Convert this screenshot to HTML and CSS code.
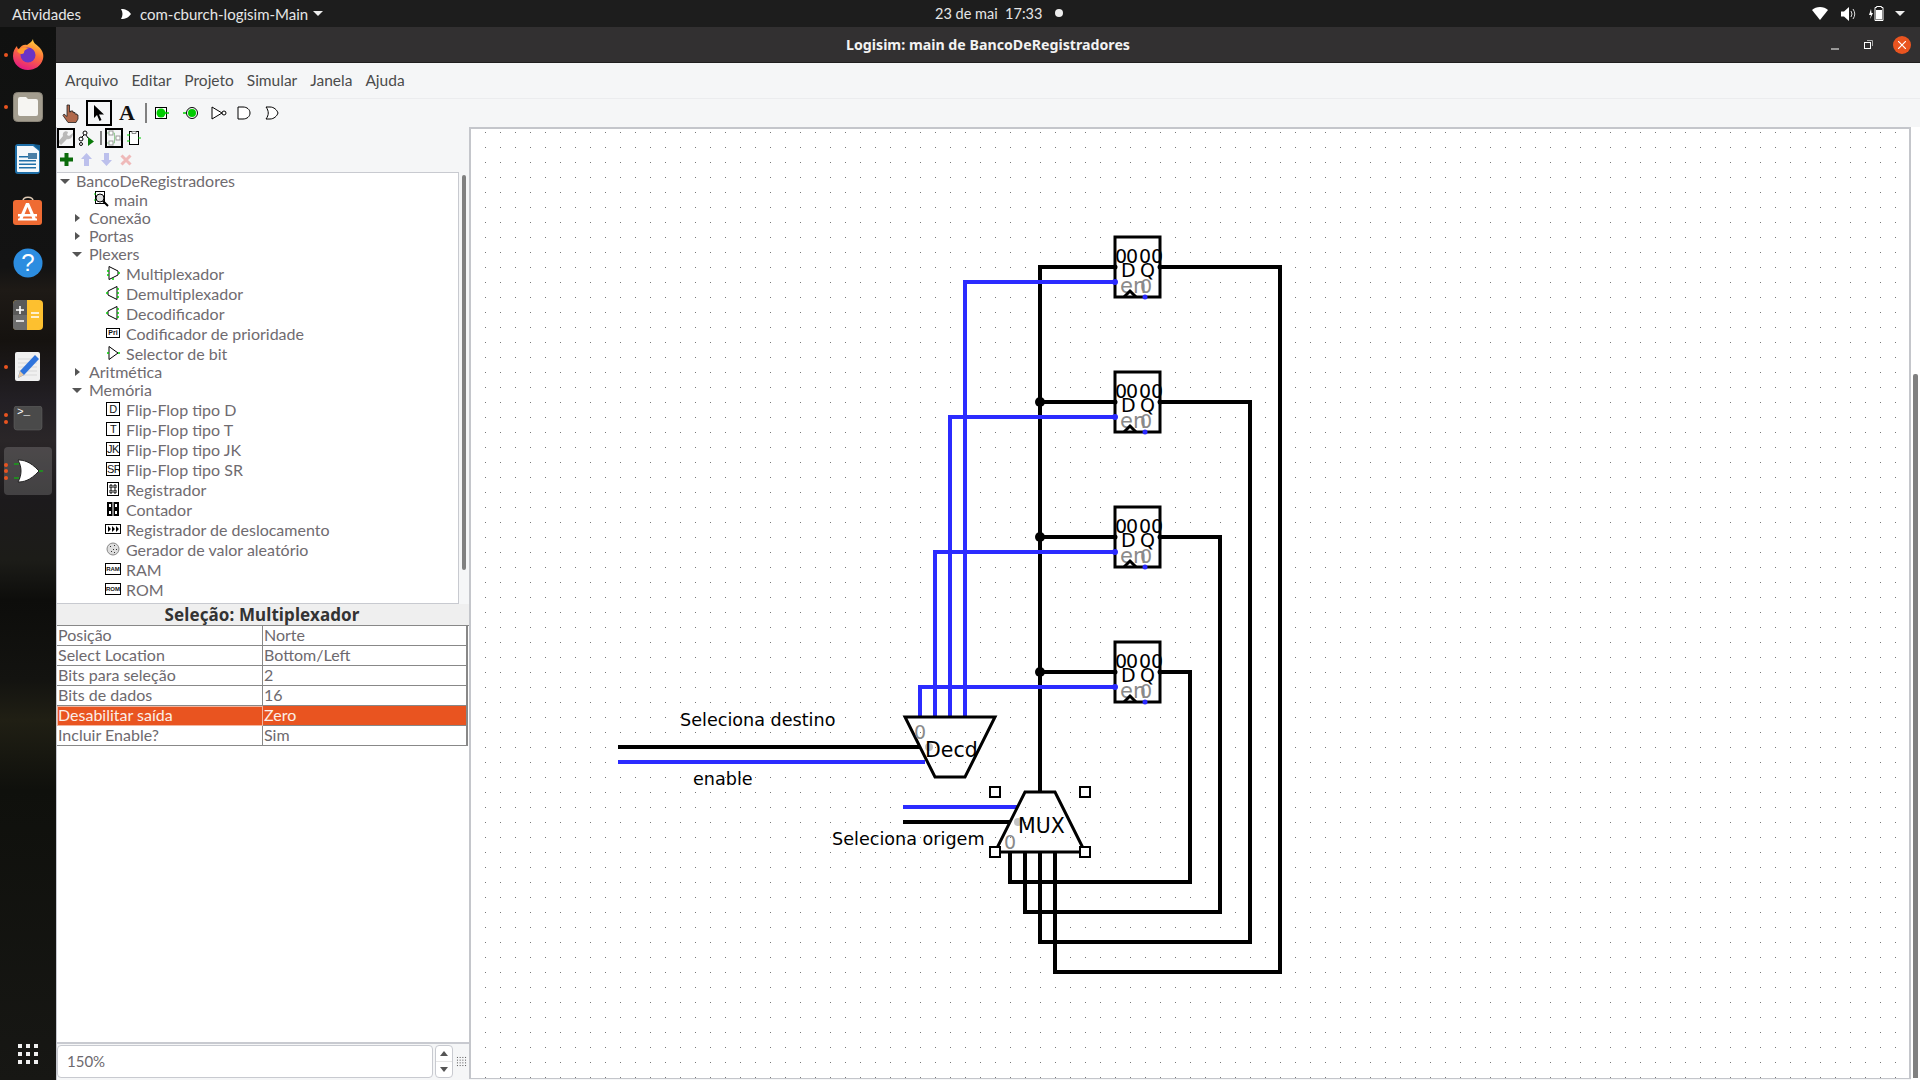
FILE: index.html
```html
<!DOCTYPE html>
<html lang="pt-BR">
<head>
<meta charset="utf-8">
<title>Logisim: main de BancoDeRegistradores</title>
<link rel="stylesheet" href="styles.css">
</head>
<body>
<svg class="defs" width="0" height="0" aria-hidden="true">
  <defs>
    <symbol id="i-mux" viewBox="0 0 16 16"><path d="M4 1.500V14.500L13 10V6Z" class="ic"/><path d="M2 6h2M2 10h2M13 8h2M8 13v2" class="ig"/></symbol>
    <symbol id="i-demux" viewBox="0 0 16 16"><path d="M12 1.500V14.500L3 10V6Z" class="ic"/><path d="M1 8h2M12 4h2M12 8h2M12 12h2" class="ig"/></symbol>
    <symbol id="i-sel" viewBox="0 0 16 16"><path d="M4 1.500V14.500L13 8Z" class="ic"/><path d="M2 8h2M13 8h2" class="ig"/></symbol>
    <symbol id="i-reg" viewBox="0 0 16 16"><rect x="2.500" y="1.500" width="11" height="13" class="ic"/><path d="M5 4h2v3H5zM9 4h2v3H9zM5 9h2v3H5zM9 9h2v3H9z" class="ic"/></symbol>
    <symbol id="i-cnt" viewBox="0 0 16 16"><rect x="2" y="1" width="12" height="14" fill="#000"/><path d="M4 3h2v3H4zM10 3h2v3h-2zM4 10h2v3H4zM10 10h2v3h-2z" fill="#fff"/><path d="M8 1v14" stroke="#fff"/></symbol>
    <symbol id="i-shift" viewBox="0 0 16 16"><rect x="0.500" y="3.500" width="15" height="9" class="ic"/><path d="M3 5l3 3-3 3zM7 5l3 3-3 3zM11 5l3 3-3 3z" fill="#000"/></symbol>
    <symbol id="i-rand" viewBox="0 0 16 16"><circle cx="8" cy="8" r="6" fill="#ddd" stroke="#888"/><path d="M5 5h1v1H5zM9 4h1v1H9zM11 8h1v1h-1zM6 10h1v1H6zM8 8h1v1H8zM9 11h1v1H9z" fill="#333"/></symbol>
  </defs>
</svg>

<header class="topbar">
  <span class="activities">Atividades</span>
  <span class="app-menu">
    <svg class="app-glyph" width="12" height="12" viewBox="0 0 12 12"><path d="M1 1C3 4 3 8 1 11C6 11 9 9 11 6C9 3 6 1 1 1Z" fill="#fff"/></svg>
    <span>com-cburch-logisim-Main</span>
    <i class="caret"></i>
  </span>
  <span class="clock">23 de mai&nbsp;&nbsp;17:33</span><i class="clock-dot"></i>
  <span class="tray">
    <svg width="16" height="14" viewBox="0 0 16 14"><path d="M0 3C4 -1 12 -1 16 3L8 13Z" fill="#fff"/></svg>
    <svg width="15" height="14" viewBox="0 0 15 14"><path d="M0 4.500H3L8 0V14L3 9.500H0Z" fill="#fff"/><path d="M10 4Q12 7 10 10M12 2Q15.500 7 12 12" fill="none" stroke="#ddd"/></svg>
    <svg width="15" height="15" viewBox="0 0 15 15"><path d="M2 1L0 7H2L1 11L4 5H2.500Z" fill="#fff" transform="translate(0 2)"/><path d="M7.500.5h5v1h1.500v13h-8v-13h1.500z" fill="none" stroke="#fff"/><rect x="7" y="4" width="6" height="9.500" fill="#fff"/></svg>
    <i class="caret"></i>
  </span>
</header>

<div class="desktop">
  <nav class="dock">
    <div class="dock-item"><i class="run run1"></i>
      <svg class="ff" width="32" height="32" viewBox="0 0 32 32"><defs><linearGradient id="ffg" x1="0.700" y1="0" x2="0.300" y2="1"><stop offset="0" stop-color="#ffd53c"/><stop offset=".45" stop-color="#ff7139"/><stop offset="1" stop-color="#e31587"/></linearGradient></defs><path d="M21 1C21 5 24 6 27 9C31 13 32 17 31 21C29 28 23 32 16 32C8 32 1 26 1 18C1 13 3 10 5 8C5 10 6 11 7 11C9 7 13 6 15 7C17 5 20 4 21 1Z" fill="url(#ffg)"/><circle cx="16" cy="17" r="7.500" fill="#6b34c5"/><path d="M5 13C8 9 13 9 17 11C13 11 12 13 12 15C10 17 7 16 5 13Z" fill="#ff9d2e"/></svg>
    </div>
    <div class="dock-item"><i class="run run1"></i>
      <svg width="30" height="30" viewBox="0 0 30 30"><rect x=".5" y=".5" width="29" height="29" rx="4" fill="#a39d8f" stroke="#8a8578"/><path d="M5 7a2 2 0 012-2h6l2 2h8a2 2 0 012 2v13a2 2 0 01-2 2H7a2 2 0 01-2-2Z" fill="#f6f5f2"/></svg>
    </div>
    <div class="dock-item">
      <svg width="26" height="30" viewBox="0 0 26 30"><path d="M3 0H19L25 5V27a3 3 0 01-3 3H3a3 3 0 01-3-3V3a3 3 0 013-3Z" fill="#1f6fa8"/><path d="M2 2H18L24 7V27a1 1 0 01-1 1H3a1 1 0 01-1-1Z" fill="#f4f8fb"/><path d="M18 0L25 7V1Z" fill="#125a8c"/><path d="M4 12h10v1.500H4zM4 16h17v1.500H4zM4 19.500h17v1.500H4zM4 23h17v1.500H4z" fill="#1f6fa8"/><rect x="13" y="9" width="9" height="6" fill="#4a7fa6"/></svg>
    </div>
    <div class="dock-item">
      <svg width="30" height="30" viewBox="0 0 30 30"><path d="M10 5C10 0 20 0 20 5" fill="none" stroke="#ddc9b4" stroke-width="1.500"/><rect y="4" width="29" height="25" rx="3" fill="#ef6b33"/><path d="M13 7H16L23 23H19.500L14.500 11L9.500 23H6ZM5 18H24V20.500H5ZM5 22.500H24V24.500H5Z" fill="#fff"/></svg>
    </div>
    <div class="dock-item">
      <svg width="30" height="30" viewBox="0 0 30 30"><circle cx="15" cy="15" r="14.500" fill="#2c8de0"/><text x="15" y="23" class="dock-q">?</text></svg>
    </div>
    <div class="dock-item">
      <svg width="30" height="30" viewBox="0 0 30 30"><rect width="30" height="30" rx="4" fill="#fdc02f"/><path d="M4 0H14V30H4A4 4 0 010 26V4A4 4 0 014 0Z" fill="#5a5a5a"/><path d="M0 15H14V30H4A4 4 0 010 26Z" fill="#6d6d6d"/><path d="M3 10H11M7 6V14M3 21H11M18 13H26M18 17H26" stroke="#fff" stroke-width="1.600"/></svg>
    </div>
    <div class="dock-item"><i class="run run1"></i>
      <svg width="26" height="30" viewBox="0 0 26 30"><rect width="25" height="29" rx="2" fill="#f0f0f0"/><path d="M3 7H22M3 11H22M3 15H22M3 19H22M3 23H22" stroke="#d8d8d8"/><path d="M20 3L24 7L9 23L3 26L5 19Z" fill="#2f74dc"/><path d="M5 19L9 23L3 26Z" fill="#e7c9a3"/></svg>
    </div>
    <div class="dock-item"><i class="run run2a"></i><i class="run run2b"></i>
      <svg width="30" height="26" viewBox="0 0 30 26"><rect width="28" height="24" x="1" rx="3" fill="#4a4a4a" stroke="#666" stroke-width=".5"/><text x="4" y="9" class="dock-term">&gt;_</text></svg>
    </div>
    <div class="dock-item active"><i class="run run3a"></i><i class="run run3b"></i><i class="run run3c"></i>
      <svg width="30" height="24" viewBox="0 0 30 24"><path d="M5 1C10 1 17 2 26 12C17 22 10 23 5 23C9 16 9 8 5 1Z" fill="#fff" stroke="#222"/><path d="M1 5H6M1 19H6M26 12H30" stroke="#0c0"/></svg>
    </div>
    <div class="dock-item apps">
      <svg width="21" height="21" viewBox="0 0 21 21"><path d="M0 0h4v4H0zM8 0h4v4H8zM16 0h4v4h-4zM0 8h4v4H0zM8 8h4v4H8zM16 8h4v4h-4zM0 16h4v4H0zM8 16h4v4H8zM16 16h4v4h-4z" fill="#f0f0f0"/></svg>
    </div>
  </nav>

  <main class="window">
    <div class="titlebar">
      <span class="title">Logisim: main de BancoDeRegistradores</span>
      <div class="win-buttons">
        <svg width="8" height="8" viewBox="0 0 8 8" class="wb-min"><path d="M0 7H8" stroke="#fff" stroke-width="1"/></svg>
        <svg width="9" height="9" viewBox="0 0 9 9" class="wb-max"><rect x=".5" y="2.500" width="6" height="6" fill="none" stroke="#fff"/><path d="M3 .5H8.500V6" fill="none" stroke="#aaa"/></svg>
        <span class="wb-close"><svg width="8" height="8" viewBox="0 0 8 8"><path d="M0 0L8 8M8 0L0 8" stroke="#fff" stroke-width="1.200"/></svg></span>
      </div>
    </div>

    <div class="menubar">
      <span>Arquivo</span><span>Editar</span><span>Projeto</span><span>Simular</span><span>Janela</span><span>Ajuda</span>
    </div>

    <div class="toolbar">
      <span class="tool"><svg width="18" height="19" viewBox="0 0 18 19"><path d="M5 1h2.500v7l1 0V7h2.500v1.500h2V10h2v1h1v4l-2 3.500H6L1 11.500 2 10l3 2.500Z" fill="#b0694c" stroke="#222" stroke-width=".8"/></svg></span>
      <span class="tool tool-on"><svg width="12" height="16" viewBox="0 0 12 16"><path d="M1 0V13L4 10L6.500 16L8.500 15L6 9.500H11Z" fill="#000"/></svg></span>
      <span class="tool tool-a">A</span>
      <i class="sep sep-main"></i>
      <span class="tool"><svg width="16" height="14" viewBox="0 0 16 14"><rect x=".5" y="1.500" width="11" height="11" fill="#fff" stroke="#000"/><circle cx="6" cy="7" r="4.500" fill="#0c0"/><path d="M9 7H14" stroke="#0c0" stroke-width="1.500"/></svg></span>
      <span class="tool"><svg width="16" height="14" viewBox="0 0 16 14"><path d="M0 7H4" stroke="#0c0" stroke-width="1.500"/><circle cx="9" cy="7" r="5.500" fill="#fff" stroke="#000"/><circle cx="9" cy="7" r="4" fill="#0c0"/></svg></span>
      <span class="tool"><svg width="16" height="14" viewBox="0 0 16 14"><path d="M1 1V13L11 7Z" fill="#fff" stroke="#000"/><circle cx="13" cy="7" r="2" fill="#fff" stroke="#000"/></svg></span>
      <span class="tool tool-and"><svg width="14" height="14" viewBox="0 0 14 14"><path d="M1 1H6C10 1 13 3.500 13 7S10 13 6 13H1Z" fill="#fff" stroke="#000"/></svg></span>
      <span class="tool"><svg width="14" height="14" viewBox="0 0 14 14"><path d="M1 1H5C9 1 12 4 13 7C12 10 9 13 5 13H1C4 9 4 5 1 1Z" fill="#fff" stroke="#000"/></svg></span>
    </div>

    <div class="workspace">
      <aside class="left">
        <div class="tabs">
          <span class="mini mini-on"><svg width="16" height="16" viewBox="0 0 16 16"><path d="M15 3L11 6L9 5L10 2C7 0 4 3 5 6L0 12L3 15L9 9C12 10 15 7 15 3Z" fill="#b9b9b9"/></svg></span>
          <span class="mini"><svg width="16" height="16" viewBox="0 0 16 16"><circle cx="7" cy="3" r="2" fill="#fff" stroke="#000"/><circle cx="3" cy="9" r="2" fill="#fff" stroke="#000"/><circle cx="3" cy="14" r="1.500" fill="#fff" stroke="#000"/><path d="M6 5L3.500 7.500M8 5L10 8" stroke="#000"/><path d="M10 7L16 11.500L10 16Z" fill="#0a7a0a"/></svg></span>
          <i class="sep sep-mini"></i>
          <span class="mini mini-on"><svg width="16" height="16" viewBox="0 0 16 16"><rect x="3" y="1" width="4" height="4" fill="#fff" stroke="#999"/><rect x="3" y="11" width="4" height="4" fill="#fff" stroke="#999"/><rect x="10" y="6" width="4" height="4" fill="#fff" stroke="#999"/><path d="M0 3H3M0 13H3M7 3H8.500V13H7M8.500 8H10" fill="none" stroke="#9c9"/></svg></span>
          <span class="mini"><svg width="14" height="16" viewBox="0 0 14 16"><rect x="2.500" y="1.500" width="9" height="13" fill="#fff" stroke="#000"/><path d="M5 1.500h4v2H5z" fill="#fff" stroke="#888"/><path d="M0 5H3M0 11H3M11 8H14" stroke="#0c0"/></svg></span>
        </div>
        <div class="tabs tabs-edit">
          <span class="mini"><svg width="13" height="13" viewBox="0 0 13 13"><path d="M4.500 0h4v4.500H13v4H8.500V13h-4V8.500H0v-4h4.500Z" fill="#0a6b0a"/></svg></span>
          <span class="mini"><svg width="11" height="13" viewBox="0 0 11 13"><path d="M5.500 0L11 6H8V13H3V6H0Z" fill="#bcc0ec"/></svg></span>
          <span class="mini"><svg width="11" height="13" viewBox="0 0 11 13"><path d="M5.500 13L11 7H8V0H3V7H0Z" fill="#bcc0ec"/></svg></span>
          <span class="mini"><svg width="12" height="12" viewBox="0 0 12 12"><path d="M1.500 1.500L10.500 10.500M10.500 1.500L1.500 10.500" stroke="#efb9b9" stroke-width="3"/></svg></span>
        </div>

        <div class="explorer">
          <div class="tree">
            <div class="lib root"><i class="tri open"></i>BancoDeRegistradores</div>
            <div class="item circ"><svg class="ti" width="16" height="16" viewBox="0 0 16 16"><rect x="1.500" y=".5" width="9" height="12" fill="#fff" stroke="#000"/><circle cx="6" cy="7" r="4" fill="#ddd" stroke="#000"/><path d="M9 10L14 15" stroke="#000" stroke-width="2"/><path d="M0 3H2M0 9H2" stroke="#0c0"/></svg><span>main</span></div>
            <div class="lib"><i class="tri"></i>Conexão</div>
            <div class="lib"><i class="tri"></i>Portas</div>
            <div class="lib"><i class="tri open"></i>Plexers</div>
            <div class="item"><svg class="ti" width="16" height="16"><use href="#i-mux"/></svg><span>Multiplexador</span></div>
            <div class="item"><svg class="ti" width="16" height="16"><use href="#i-demux"/></svg><span>Demultiplexador</span></div>
            <div class="item"><svg class="ti" width="16" height="16"><use href="#i-demux"/></svg><span>Decodificador</span></div>
            <div class="item"><span class="tb tb-s">Pri</span><span>Codificador de prioridade</span></div>
            <div class="item"><svg class="ti" width="16" height="16"><use href="#i-sel"/></svg><span>Selector de bit</span></div>
            <div class="lib"><i class="tri"></i>Aritmética</div>
            <div class="lib"><i class="tri open"></i>Memória</div>
            <div class="item"><span class="tb">D</span><span>Flip-Flop tipo D</span></div>
            <div class="item"><span class="tb">T</span><span>Flip-Flop tipo T</span></div>
            <div class="item"><span class="tb">JK</span><span>Flip-Flop tipo JK</span></div>
            <div class="item"><span class="tb">SR</span><span>Flip-Flop tipo SR</span></div>
            <div class="item"><svg class="ti" width="16" height="16"><use href="#i-reg"/></svg><span>Registrador</span></div>
            <div class="item"><svg class="ti" width="16" height="16"><use href="#i-cnt"/></svg><span>Contador</span></div>
            <div class="item"><svg class="ti" width="16" height="16"><use href="#i-shift"/></svg><span>Registrador de deslocamento</span></div>
            <div class="item"><svg class="ti" width="16" height="16"><use href="#i-rand"/></svg><span>Gerador de valor aleatório</span></div>
            <div class="item"><span class="tb tb-m">RAM</span><span>RAM</span></div>
            <div class="item"><span class="tb tb-m">ROM</span><span>ROM</span></div>
            <div class="item"><span class="tb-blank"></span><span>Joystick</span></div>
          </div>
          <div class="tree-scroll"><i class="tree-thumb"></i></div>
        </div>

        <div class="prop-title">Seleção: Multiplexador</div>
        <div class="props">
          <span>Posição</span><span>Norte</span>
          <span>Select Location</span><span>Bottom/Left</span>
          <span>Bits para seleção</span><span>2</span>
          <span>Bits de dados</span><span>16</span>
          <span class="sel sel-k">Desabilitar saída</span><span class="sel">Zero</span>
          <span>Incluir Enable?</span><span>Sim</span>
        </div>
        <div class="prop-fill"></div>

        <div class="zoombar">
          <span class="zoom-input">150%</span>
          <span class="spin"><i class="up"></i><i class="down"></i></span>
          <span class="griddots"></span>
        </div>
      </aside>

      <section class="canvas">
        <svg class="board" width="1438" height="949" viewBox="471 129 1438 949">
          <defs>
            <pattern id="dots" patternUnits="userSpaceOnUse" x="5" y="12" width="15" height="15"><rect width="1" height="1" fill="#777"/></pattern>
          </defs>
          <rect x="471" y="129" width="1438" height="949" fill="#fff"/>
          <rect x="471" y="129" width="1438" height="949" fill="url(#dots)"/>

          <g class="w">
            <path d="M1040 792V267H1115"/>
            <path d="M1040 402H1115M1040 537H1115M1040 672H1115"/>
            <path d="M1160 267H1280V972H1055V852"/>
            <path d="M1160 402H1250V942H1040V852"/>
            <path d="M1160 537H1220V912H1025V852"/>
            <path d="M1160 672H1190V882H1010V852"/>
            <path d="M618 747H920"/>
            <path d="M903 822H1010"/>
          </g>
          <circle cx="1040" cy="402" r="5"/><circle cx="1040" cy="537" r="5"/><circle cx="1040" cy="672" r="5"/>

          <g class="wb">
            <path d="M965 717V282H1115"/>
            <path d="M950 717V417H1115"/>
            <path d="M935 717V552H1115"/>
            <path d="M920 717V687H1115"/>
            <path d="M618 762H925"/>
            <path d="M903 807H1017"/>
          </g>

          <g transform="translate(1115 237)" class="reg">
            <rect width="45" height="60" class="box"/>
            <text x="0" y="26" class="r0">0</text><text x="11" y="26" class="r0">0</text><text x="24" y="26" class="r0">0</text><text x="36" y="26" class="r0">0</text>
            <text x="6" y="40" class="r0">D</text><text x="25" y="40" class="r0">Q</text>
            <text x="5" y="56" class="re">en</text><text x="25" y="56" class="rg">0</text>
            <path d="M9 60L15 54L21 60" class="clk"/>
            <circle cx="0" cy="30" r="2.500"/><circle cx="45" cy="30" r="2.500"/>
            <circle cx="0" cy="45" r="3" class="bd"/><circle cx="30" cy="60" r="2.500" class="bd"/>
          </g>
          <g transform="translate(1115 372)" class="reg">
            <rect width="45" height="60" class="box"/>
            <text x="0" y="26" class="r0">0</text><text x="11" y="26" class="r0">0</text><text x="24" y="26" class="r0">0</text><text x="36" y="26" class="r0">0</text>
            <text x="6" y="40" class="r0">D</text><text x="25" y="40" class="r0">Q</text>
            <text x="5" y="56" class="re">en</text><text x="25" y="56" class="rg">0</text>
            <path d="M9 60L15 54L21 60" class="clk"/>
            <circle cx="0" cy="30" r="2.500"/><circle cx="45" cy="30" r="2.500"/>
            <circle cx="0" cy="45" r="3" class="bd"/><circle cx="30" cy="60" r="2.500" class="bd"/>
          </g>
          <g transform="translate(1115 507)" class="reg">
            <rect width="45" height="60" class="box"/>
            <text x="0" y="26" class="r0">0</text><text x="11" y="26" class="r0">0</text><text x="24" y="26" class="r0">0</text><text x="36" y="26" class="r0">0</text>
            <text x="6" y="40" class="r0">D</text><text x="25" y="40" class="r0">Q</text>
            <text x="5" y="56" class="re">en</text><text x="25" y="56" class="rg">0</text>
            <path d="M9 60L15 54L21 60" class="clk"/>
            <circle cx="0" cy="30" r="2.500"/><circle cx="45" cy="30" r="2.500"/>
            <circle cx="0" cy="45" r="3" class="bd"/><circle cx="30" cy="60" r="2.500" class="bd"/>
          </g>
          <g transform="translate(1115 642)" class="reg">
            <rect width="45" height="60" class="box"/>
            <text x="0" y="26" class="r0">0</text><text x="11" y="26" class="r0">0</text><text x="24" y="26" class="r0">0</text><text x="36" y="26" class="r0">0</text>
            <text x="6" y="40" class="r0">D</text><text x="25" y="40" class="r0">Q</text>
            <text x="5" y="56" class="re">en</text><text x="25" y="56" class="rg">0</text>
            <path d="M9 60L15 54L21 60" class="clk"/>
            <circle cx="0" cy="30" r="2.500"/><circle cx="45" cy="30" r="2.500"/>
            <circle cx="0" cy="45" r="3" class="bd"/><circle cx="30" cy="60" r="2.500" class="bd"/>
          </g>

          <path d="M905 717H995L965 777H935Z" class="gate"/>
          <text x="914" y="739" class="rg">0</text>
          <circle cx="929" cy="747" r="4" class="gd"/>
          <text x="925" y="757" class="gl">Decd</text>

          <path d="M1025 792H1055L1085 852H995Z" class="gate"/>
          <path d="M1040 792V785" class="stub"/>
          <text x="1004" y="849" class="rg">0</text>
          <circle cx="1018" cy="822" r="4" class="gd"/>
          <text x="1018" y="833" class="gl">MUX</text>
          <rect x="990" y="787" width="10" height="10" class="hd"/>
          <rect x="1080" y="787" width="10" height="10" class="hd"/>
          <rect x="990" y="847" width="10" height="10" class="hd"/>
          <rect x="1080" y="847" width="10" height="10" class="hd"/>

          <text x="680" y="726" class="lb">Seleciona destino</text>
          <text x="693" y="785" class="lb">enable</text>
          <text x="832" y="845" class="lb">Seleciona origem</text>
        </svg>
      </section>
      <div class="vscroll"><i class="vthumb"></i></div>
    </div>
  </main>
</div>
</body>
</html>
```

FILE: styles.css
```css
* { box-sizing: border-box; }
html, body { margin: 0; padding: 0; height: 100%; }
body {
  width: 1920px; height: 1080px; overflow: hidden;
  display: flex; flex-direction: column;
  font-family: "Lato", "Noto Sans", sans-serif;
  background: #111;
}
.defs { position: absolute; }
.ic { fill: #fff; stroke: #000; stroke-width: 1; }
.ig { fill: none; stroke: #0c0; stroke-width: 1.500; }

/* top bar */
.topbar {
  height: 27px; flex: none; background: #1d1d1d; color: #e6e6e6;
  display: flex; align-items: center; font-size: 15px; position: relative;
}
.activities { margin-left: 12px; width: 108px; }
.app-menu { display: flex; align-items: center; gap: 8px; }
.app-menu .caret { margin-left: -3px; }
.caret { display: block; width: 0; height: 0; border: 5px solid transparent; border-top: 5px solid #eee; border-bottom: 0; }
.clock { position: absolute; left: 935px; font-size: 14.500px; }
.clock-dot { position: absolute; left: 1055px; top: 9px; width: 8px; height: 8px; border-radius: 50%; background: #eee; }
.tray { margin-left: auto; margin-right: 15px; display: flex; align-items: center; gap: 13px; }
.tray .caret { margin-left: -2px; }

.desktop { flex: 1; display: flex; min-height: 0; }

/* dock */
.dock {
  width: 56px; flex: none; display: flex; flex-direction: column; padding-top: 2px;
  background: linear-gradient(180deg, #101110 0, #131313 240px, #1e1a16 263px, #15120f 313px, #221f24 373px, #2a2628 413px, #1c1a1c 473px, #1c1c18 533px, #0d0d0b 573px, #131310 653px, #201f14 693px, #0f100c 763px, #171714 1053px);
}
.dock-item { height: 52px; flex: none; display: flex; align-items: center; justify-content: center; position: relative; }
.dock-item.active::before { content: ""; position: absolute; left: 4px; right: 4px; top: 2px; bottom: 2px; background: rgba(255,255,255,.17); border-radius: 4px; }
.dock-item svg { position: relative; }
.dock-item .ff { margin-bottom: 2px; }
.dock-item.apps { margin-top: auto; }
.run { position: absolute; left: 4px; width: 4px; height: 4px; border-radius: 50%; background: #e95420; z-index: 1; }
.run1 { top: 24px; }
.run2a { top: 20px; } .run2b { top: 27px; }
.run3a { top: 18px; } .run3b { top: 24px; } .run3c { top: 31px; }
.dock-q { font: 400 24px "Liberation Sans", sans-serif; fill: #fff; text-anchor: middle; }
.dock-term { font: 11px "Liberation Mono", monospace; fill: #fff; }

/* window */
.window { flex: 1; display: flex; flex-direction: column; min-width: 0; background: #f5f6f7; }
.titlebar {
  height: 36px; flex: none; background: #323031; border-bottom: 1px solid #1f1e1e; color: #f2f2f2;
  display: flex; align-items: center; justify-content: center; position: relative;
  font-weight: 700; font-size: 14.200px; font-family: "Noto Sans", sans-serif;
}
.win-buttons { position: absolute; right: 9px; top: 0; bottom: 0; display: flex; align-items: center; }
.wb-min { margin-right: 25px; margin-top: 2px; }
.wb-max { margin-right: 20px; }
.wb-close { width: 18px; height: 18px; border-radius: 50%; background: #e95420; display: flex; align-items: center; justify-content: center; }

.menubar {
  height: 36px; flex: none; display: flex; align-items: center; gap: 13px; padding: 0 0 2px 9px;
  font-size: 15.500px; color: #4b4b4b; border-bottom: 1px solid #ebecee;
}

.toolbar { height: 28px; flex: none; display: flex; align-items: center; padding-left: 1px; }
.tool { width: 28px; height: 26px; flex: none; display: flex; align-items: center; justify-content: center; }
.tool-on { outline: 2px solid #000; outline-offset: -2px; width: 26px; margin: 0 1px; }
.tool-and { margin-left: -3px; }
.tool-a { font: 700 22px "Liberation Serif", serif; color: #111; }
.sep { display: block; background: #808080; flex: none; }
.sep-main { width: 2px; height: 20px; margin: 0 2px 0 4px; }

.workspace { flex: 1; display: flex; min-height: 0; }
.left {
  width: 413px; flex: none; display: flex; flex-direction: column; border-left: 1px solid #c6c8cf;
}
.tabs { height: 22px; flex: none; display: flex; align-items: center; margin-left: -1px; }
.tabs-edit { height: 23px; padding-bottom: 2px; }
.mini { width: 20px; height: 20px; flex: none; display: flex; align-items: center; justify-content: center; }
.mini-on { outline: 2px solid #000; outline-offset: -2px; width: 18px; margin: 0 1px; }
.sep-mini { width: 2px; height: 14px; margin: 0 2px 0 4px; }

.explorer { height: 432px; flex: none; display: flex; }
.tree {
  width: 402px; flex: none; background: #fff; border: 1px solid #c8cad0; border-left: 0;
  overflow: hidden; font-size: 16px; color: #6f6b70;
}
.lib { height: 18px; display: flex; align-items: center; padding-left: 18px; line-height: 18px; white-space: nowrap; }
.lib.root { height: 16px; padding-left: 6px; }
.tri { display: block; flex: none; width: 0; height: 0; margin-right: 9px; border-style: solid; border-width: 4.500px 0 4.500px 5px; border-color: transparent transparent transparent #555; }
.tri.open { border-width: 5px 5px 0 5px; border-color: #555 transparent transparent transparent; margin-left: -3px; margin-right: 7px; }
.root .tri.open { margin-right: 6px; }
.item { height: 20px; display: flex; align-items: center; padding-left: 48px; white-space: nowrap; }
.item.circ { padding-left: 37px; }
.item .ti { margin-right: 5px; flex: none; }
.circ .ti { margin-right: 4px; }
.tb {
  width: 14px; height: 14px; border: 1px solid #000; margin: 0 6px 0 1px; flex: none; background: #fff;
  font: 11px/12px "Liberation Sans", sans-serif; color: #111; text-align: center; overflow: hidden; letter-spacing: -.5px;
}
.tb-s { font-size: 7px; font-weight: 700; letter-spacing: 0; height: 10px; line-height: 8px; }
.tb-m { font-size: 6px; font-weight: 700; letter-spacing: 0; width: 16px; height: 12px; line-height: 10px; margin: 0 5px 0 0; }
.tb-blank { width: 21px; flex: none; }
.tree-scroll { flex: 1; position: relative; background: #f5f6f7; }
.tree-thumb { position: absolute; left: 3px; top: 3px; width: 4px; height: 395px; background: #808080; border-radius: 2px; }

.prop-title {
  height: 21px; flex: none; background: #efefef; text-align: center; line-height: 21px;
  font-weight: 700; font-size: 17px; letter-spacing: .1px; color: #333; font-family: "Noto Sans", sans-serif; padding-right: 2px;
}
.props {
  flex: none; display: grid; grid-template-columns: 206px 205px; grid-auto-rows: 20px;
  background: #fff; border-top: 1px solid #888; font-size: 16px; color: #6d696e;
}
.props span { border-bottom: 1px solid #888; border-right: 1px solid #888; padding-left: 1px; line-height: 17px; white-space: nowrap; }
.props span:nth-child(2n) { border-right: 2px solid #888; }
.props .sel { background: #e95420; color: #fbeee8; }
.props .sel-k { outline: 1px solid #f2b59e; outline-offset: -1px; }
.prop-fill { flex: 1; background: #fff; border-bottom: 2px solid #c8cad0; }

.zoombar { height: 36px; flex: none; display: flex; align-items: flex-start; padding-top: 1px; }
.zoom-input {
  width: 376px; height: 33px; border: 1px solid #c8cad0; border-radius: 4px; background: #fff;
  font-size: 15px; color: #6d696e; line-height: 30px; padding-left: 9px; flex: none;
}
.spin {
  width: 18px; height: 33px; margin-left: 2px; border: 1px solid #c8cad0; border-radius: 4px; background: #fff;
  display: flex; flex-direction: column; flex: none;
}
.spin i { flex: 1; display: flex; align-items: center; justify-content: center; }
.up::before { content: ""; border: 4.500px solid transparent; border-bottom: 5px solid #555; border-top: 0; }
.down { border-top: 1px solid #e6e6e6; }
.down::before { content: ""; border: 4.500px solid transparent; border-top: 5px solid #555; border-bottom: 0; }
.griddots {
  width: 11px; height: 11px; margin: 11px 0 0 3px; flex: none;
  background-image: radial-gradient(#333 .6px, transparent .8px); background-size: 2.750px 2.750px;
}

/* canvas */
.canvas { width: 1442px; flex: none; border: 2px solid #c4c6cb; border-bottom: 1px solid #c4c6cb; background: #fff; overflow: hidden; height: 952px; }
.board { display: block; }
.w path, .wb path { fill: none; stroke-width: 4; stroke-linecap: butt; stroke-linejoin: miter; }
.w path { stroke: #000; }
.wb path { stroke: #2b2bff; }
.box { fill: #fff; stroke: #000; stroke-width: 3; }
.r0 { font: 19px "DejaVu Sans", sans-serif; fill: #000; }
.rg { font: 19px "DejaVu Sans", sans-serif; fill: #8a8a8a; }
.re { font: 21px "DejaVu Sans", sans-serif; fill: #8a8a8a; }
.clk { fill: none; stroke: #000; stroke-width: 3; }
.bd { fill: #2b2bff; }
.gate { fill: none; stroke: #000; stroke-width: 3; stroke-linejoin: miter; }
.stub { stroke: #000; stroke-width: 4; }
.gd { fill: #c4c4c4; }
.gl { font: 20.500px "DejaVu Sans", sans-serif; fill: #000; }
.lb { font: 17.600px "DejaVu Sans", sans-serif; fill: #000; }
.hd { fill: #fff; stroke: #000; stroke-width: 2; }
.vscroll { flex: 1; position: relative; background: #fff; }
.vthumb { position: absolute; left: 2px; top: 247px; width: 5px; height: 704px; background: #808080; border-radius: 2px 2px 0 0; }
```
